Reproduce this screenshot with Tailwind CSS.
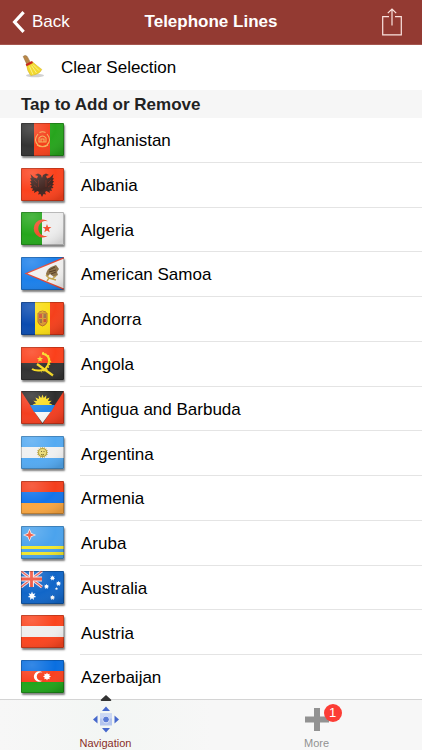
<!DOCTYPE html>
<html lang="en">

<head>
  <meta charset="UTF-8" />
  <meta name="viewport" content="width=device-width, initial-scale=1.0" />
  <title>Telephone Lines</title>
  <script src="https://cdn.jsdelivr.net/npm/@tailwindcss/browser@4"></script>
</head>
<body class="min-h-screen flex flex-col bg-white text-black text-[17px] font-['Liberation_Sans',Arial,sans-serif]">
  <header class="h-[45px] shrink-0 grid grid-cols-[1fr_auto_1fr] items-center border-b border-[#a5564e] bg-[#933a32] text-white">
    <button class="flex items-center gap-[7px] pl-3">
      <svg width="13" height="22" viewBox="0 0 13 22" fill="none" stroke="currentColor" stroke-width="3.2" aria-hidden="true">
        <path d="M11.6 1.2 2.6 11l9 9.8" />
      </svg>
      Back
    </button>
    <h1 class="font-bold">Telephone Lines</h1>
    <button class="justify-self-end pr-5" aria-label="Share">
      <svg width="20" height="28" viewBox="0 0 20 28" fill="none" stroke="#fbe3df" stroke-width="1.2" aria-hidden="true">
        <path d="M7 8.6H.7v18.3h18.6V8.6H13M10 17.5V1.2M5.8 5.2 10 1l4.2 4.2" />
      </svg>
    </button>
  </header>

  <button class="h-[45px] shrink-0 flex items-center pl-[21px] gap-4 text-left">
    <svg class="mb-1" width="24" height="24" viewBox="0 0 24 24" aria-hidden="true">
      <ellipse cx="14" cy="21.4" rx="9" ry="1.8" fill="#000" opacity=".18" />
      <path d="M2.200 2.400q2-2 4 0l3.200 6-3.600 1.800z" fill="#b98747" stroke="#8d6430" stroke-width=".5" />
      <path d="M5.600 10.800l5.800-3q5 4.500 9.400 7.600-2 5-11 6.200Q6 17 5.600 10.800z" fill="#f2d92f" stroke="#d3b024" stroke-width=".5" />
      <path d="M8.500 12.500l3.500 8M10.500 11.600l5 7.400M12 10.600l6 6" stroke="#fbf08a" stroke-width="1" />
      <path d="M4.600 10.200l6.400-3.200 1 2-6.400 3.200z" fill="#c9281e" />
    </svg>
    Clear Selection
  </button>

  <h2 class="h-7 shrink-0 flex items-center pl-[21px] pt-0.5 bg-[#f6f6f6] font-bold text-[#222]">Tap to Add or Remove</h2>

  <ul id="countryList" class="flex-1 grid auto-rows-fr"></ul>

  <nav class="sticky bottom-0 -mt-px h-[51px] shrink-0 grid grid-cols-2 border-t border-[#d4d4d4] bg-[#f7f7f7] text-[11px] leading-3">
    <a href="#navigation" class="relative flex flex-col items-center justify-end gap-1 pb-px text-[#8a2f28] bg-linear-to-r from-[#f7f7f7] via-[#f3f6f4] to-[#f7f7f7]">
      <svg class="absolute -top-[5px] left-1/2 -translate-x-1/2" width="11" height="6" viewBox="0 0 11 6" aria-hidden="true">
        <path d="M5.5 0 11 5q0 1-1 1H1Q0 6 0 5z" fill="#333" />
      </svg>
      <svg width="26" height="27" viewBox="0 0 26 27" aria-hidden="true">
        <path d="M13 .5 17 5H9zM13 26.500 17 22H9zM0 13.500 4.500 9.500v8zM26 13.500l-4.500-4v8z" fill="#4668cc" />
        <rect x="7" y="7.500" width="12" height="12" fill="#b4c5ee" />
        <rect x="7" y="7.500" width="12" height="5" fill="#cbd7f4" />
        <circle cx="13" cy="13.500" r="3.400" fill="#5b7bd6" stroke="#e2e9fa" stroke-width="1" />
      </svg>
      Navigation
    </a>
    <a href="#more" class="flex flex-col items-center justify-end gap-1.5 pb-px text-[#929292]">
      <span class="relative">
        <svg width="24" height="23" viewBox="0 0 24 23" fill="#929292" aria-hidden="true">
          <path d="M9 0h6v8.500h9v6h-9V23H9v-8.500H0v-6h9z" />
        </svg>
        <span class="absolute -top-1 left-[19px] size-[18px] rounded-full bg-[#fc3d35] text-white text-[13px] leading-[18px] text-center">1</span>
      </span>
      More
    </a>
  </nav>

  <script>
    // flag artwork, 43 x 33 each
    const bandsH = (a, b, c) => `<rect width="43" height="11" fill="${a}"/><rect y="11" width="43" height="11" fill="${b}"/><rect y="22" width="43" height="11" fill="${c}"/>`;
    const bandsV = (a, b, c) => `<rect width="14" height="33" fill="${a}"/><rect x="14" width="15" height="33" fill="${b}"/><rect x="29" width="14" height="33" fill="${c}"/>`;

    function star(cx, cy, r, points, fill, inner = 0.42) {
      const pts = [];
      for (let i = 0; i < points * 2; i++) {
        const d = i % 2 ? r * inner : r;
        const a = Math.PI * i / points - Math.PI / 2;
        pts.push((cx + d * Math.cos(a)).toFixed(1) + "," + (cy + d * Math.sin(a)).toFixed(1));
      }
      return `<polygon points="${pts.join(" ")}" fill="${fill}"/>`;
    }

    const countries = [
      { name: "Afghanistan", flag: bandsV("#333", "#f5401c", "#27a51d").replace('<rect x="14" width="15"', '<rect x="13" width="17"') + `
        <g fill="none" stroke="#f4b05a" stroke-width="1.100"><path d="M17 11q-5 6 0 11 4.500 3 9 0 5-5 0-11"/><path d="M18 19h7v-4q-3.500-4-7 0zM20 19v-3h3v3M16 22q5.500 3.500 11 0M18.500 9.500q3-1.500 6 0"/></g>` },
      { name: "Albania", flag: `<rect width="43" height="33" fill="#fb421d"/>
        <path d="M21 10l-1-3-3-1.500-3 1.500 3 1-1 2.500-3-1L9.500 6l1 4-1.500.5 1.500 2-1.500 1 1.500 2-1.500 1 2 1.500-1.500 2 2.500.5-1 2.500 2.500-.5-.5 2.500 3.500-2 1.500 1-1 2.500 2.500-.5 1.500 3 1.500-3 2.500.5-1-2.500 1.500-1 3.500 2-.5-2.500 2.500.5-1-2.500 2.500-.5-1.500-2 2-1.500-1.500-1 1.500-2-1.500-1 1.500-2-1.500-.5 1-4-3.500 3.500-3 1-1-2.500 3-1-3-1.500-3 1.500z" fill="#432722"/>
        <path d="M17.500 12v7M25 12v7M13 12l3 3M30 12l-3 3M13 17l3 2M30 17l-3 2" stroke="#8c3022" stroke-width=".6"/>` },
      { name: "Algeria", flag: `<rect width="43" height="33" fill="#eee"/><rect width="21" height="33" fill="#25a71c"/>
        <path d="M27 9.200A9 9 0 1 0 27 23.800A7.600 7.600 0 1 1 27 9.200z" fill="#f2502e"/>${star(26, 16.5, 4.6, 5, "#f2502e")}` },
      { name: "American Samoa", flag: `<rect width="43" height="33" fill="#1c80ea"/>
        <path d="M43 0 3.500 16.500 43 33z" fill="#e5432f"/><path d="M43 1.500 6.500 16.500 43 31.500z" fill="#f1f0ef"/>
        <path d="M25 17q1-5 5-7l5-2 3 4-2 3 1 3-4 2-4-3-3 3z" fill="#8b7048"/><path d="M28 13l6-3M28 15l7-2M30 17l5-2" stroke="#553e26" stroke-width="1"/>
        <path d="M25 18l3 3 7 2M28 21l-2 3M31 22l4-3" stroke="#c4a54d" stroke-width="1.500" fill="none"/>` },
      { name: "Andorra", flag: bandsV("#0a4bb0", "#fadc14", "#f5401c") + `
        <path d="M17 11h9v9q-1 3-4.500 4Q18 23 17 20z" fill="#d99a36" stroke="#b26b2b"/><path d="M18 12h3v4h-3zM22.500 17H25v3h-2.500z" fill="#cf5232"/><path d="M22.500 12H25v4h-2.500zM18 17h3v4h-2z" fill="#9b7343"/><path d="M18 10q3.500-2 7 0" stroke="#b26b2b" fill="none"/>` },
      { name: "Angola", flag: `<rect width="43" height="33" fill="#333"/><rect width="43" height="16" fill="#fb401b"/>
        <path d="M21 6.500Q29 8 28 15 26 23.500 19 23.500 14 24 11 22" fill="none" stroke="#f7dc26" stroke-width="2"/><path d="M21.500 5.500l6 3.500 2 6-3 7-6 3" fill="none" stroke="#f7dc26" stroke-width="1.500" stroke-dasharray="1.500 1.500"/>
        <path d="M16 17 32 28.500" stroke="#f7dc26" stroke-width="2.200"/>${star(19, 12, 3.3, 5, "#f7dc26")}` },
      { name: "Antigua and Barbuda", flag: `<rect width="43" height="33" fill="#f43e20"/>
        <path d="M0 0h43L21.500 33z" fill="#2f2f2f"/>${star(21.5, 13.5, 10, 16, "#fadd25", 0.65)}
        <path d="M9 14h25l-4 7H13z" fill="#2588e8"/><path d="M13.500 21h16l-8 11z" fill="#f6f6f6"/>` },
      { name: "Argentina", flag: bandsH("#54aaf2", "#f0f0f0", "#54aaf2") + `
        ${star(21.5, 16.5, 5.8, 16, "#b7a13b", 0.75)}<circle cx="21.500" cy="16.500" r="3.600" fill="#eadb78"/><path d="M20 15.500h1M22.500 15.500h1M20 18.500q1.500 1 3 0" stroke="#77652a" fill="none"/>` },
      { name: "Armenia", flag: bandsH("#f43f1d", "#1474ea", "#fba741") },
      { name: "Aruba", flag: `<rect width="43" height="33" fill="#4ba3ed"/><path d="M0 21.500h43M0 27.500h43" stroke="#f3e92f" stroke-width="3.200"/>
        ${star(8.5, 9, 6.6, 4, "#f6e8e8", 0.42)}${star(8.5, 9, 5, 4, "#f0492f", 0.38)}` },
      { name: "Australia", flag: `<rect width="43" height="33" fill="#1166c8"/>
        <path d="M0 0l21 16M21 0 0 16" stroke="#e8dce6" stroke-width="3"/><path d="M0 0l21 16M21 0 0 16" stroke="#e95045" stroke-width="1.200"/>
        <path d="M10.500 0v16M0 8h21" stroke="#f0e3e9" stroke-width="5"/><path d="M10.500 0v16M0 8h21" stroke="#f04a32" stroke-width="2.800"/>
        ${star(11, 25, 4.4, 7, "#fff", 0.5)}${star(31.5, 7, 2.7, 7, "#fff", 0.55)}${star(25.5, 15.5, 2.7, 7, "#fff", 0.55)}${star(37.5, 12.5, 2.7, 7, "#fff", 0.55)}${star(31.5, 26.5, 2.7, 7, "#fff", 0.55)}${star(35.5, 17.8, 1.5, 5, "#fff", 0.55)}` },
      { name: "Austria", flag: bandsH("#fb451f", "#eee", "#fb451f") },
      { name: "Azerbaijan", flag: bandsH("#0a6fe0", "#f8411f", "#20a51b") + `
        <path d="M21.500 12.600A5.200 5.200 0 1 0 21.500 20.400A4.200 4.200 0 1 1 21.500 12.600z" fill="#fff"/>${star(26, 16.5, 4, 8, "#fff", 0.6)}` },
    ];

    document.getElementById("countryList").innerHTML = countries.map((c, i) => `
      <li class="flex">
        <button class="flex-1 flex items-stretch pl-[21px] gap-4 text-left">
          <svg class="self-center shrink-0 mb-0.5 rounded-[1px] shadow-[1px_2px_2px_rgba(0,0,0,0.5)]" width="43" height="33" viewBox="0 0 43 33" aria-hidden="true">
            <defs><radialGradient id="gloss${i}" cx=".25" cy=".15" r="1">
              <stop offset="0" stop-color="#fff" stop-opacity=".18"/><stop offset=".55" stop-color="#fff" stop-opacity="0"/><stop offset="1" stop-color="#000" stop-opacity=".12"/>
            </radialGradient></defs>
            ${c.flag}
            <rect width="43" height="33" fill="url(#gloss${i})"/>
            <rect x=".5" y=".5" width="42" height="32" fill="none" stroke="#000" stroke-opacity=".22"/>
          </svg>
          <span class="flex-1 flex items-center pl-px pt-0.5 border-b border-[#e4e4e4]">${c.name}</span>
        </button>
      </li>
    `).join("");
  </script>
</body>
</html>
